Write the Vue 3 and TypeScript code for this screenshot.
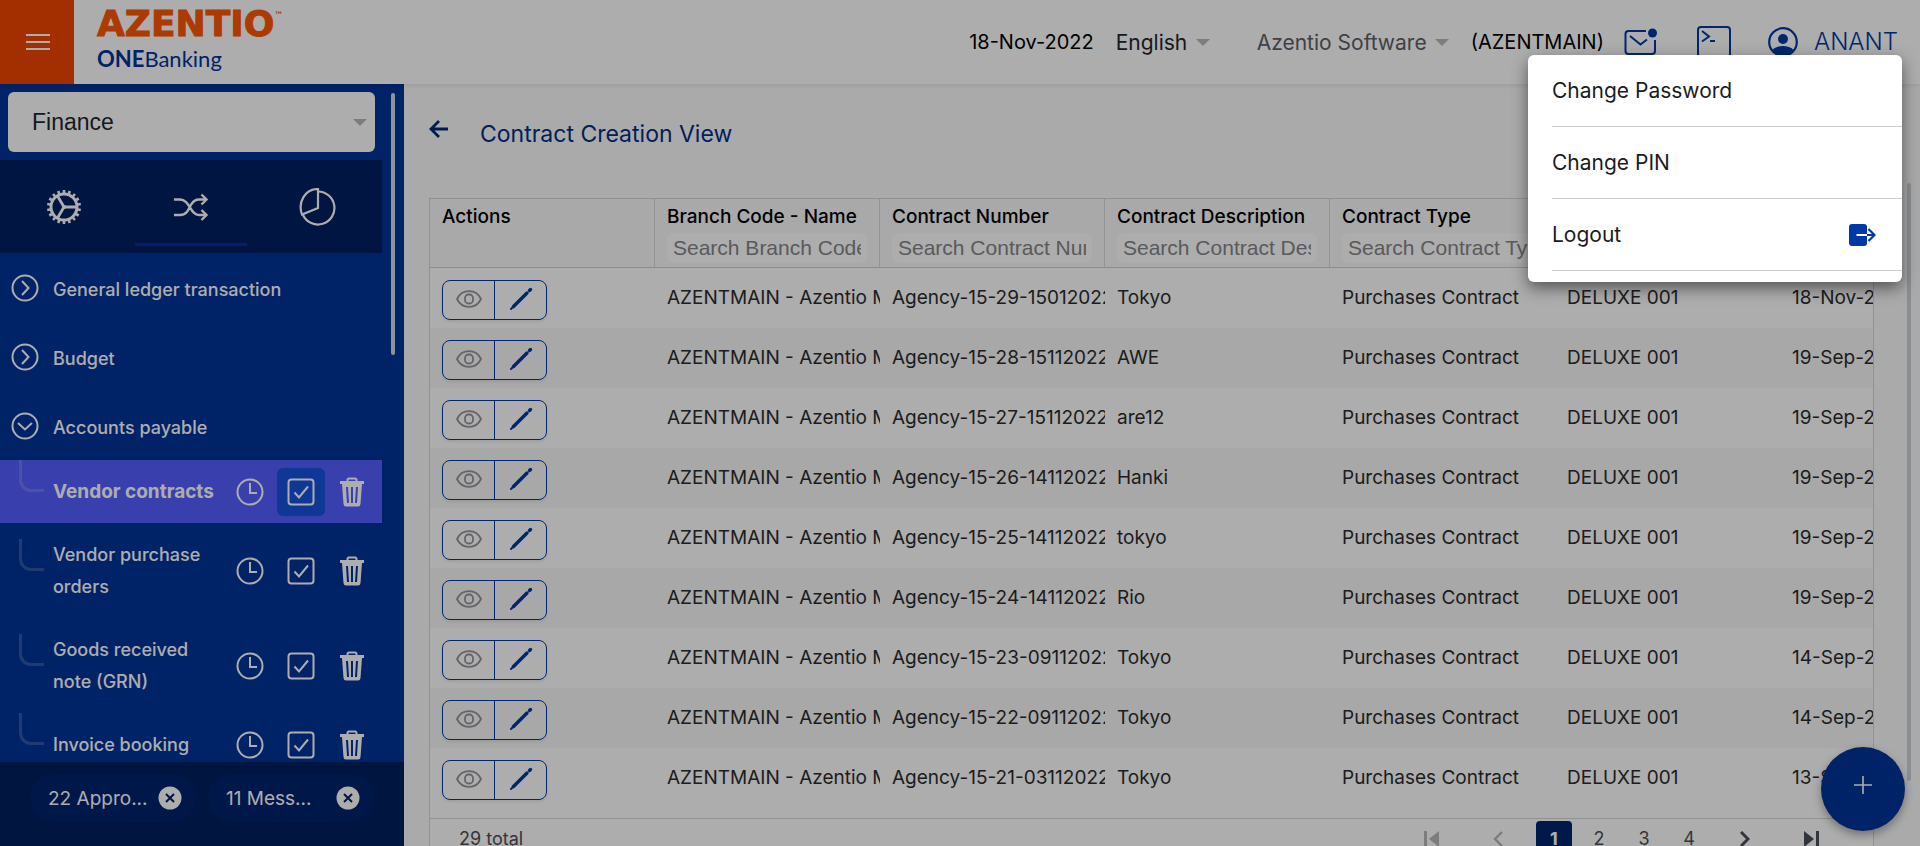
<script setup lang="ts">
import { ref } from 'vue'

interface ContractRow {
  number: string
  description: string
  date: string
}

interface SubItem {
  label: string
  active?: boolean
}

const groups: { label: string; open: boolean }[] = [
  { label: 'General ledger transaction', open: false },
  { label: 'Budget', open: false },
  { label: 'Accounts payable', open: true },
]

const subItems: SubItem[] = [
  { label: 'Vendor contracts', active: true },
  { label: 'Vendor purchase orders' },
  { label: 'Goods received note (GRN)' },
  { label: 'Invoice booking' },
]

const chips: string[] = ['22 Appro...', '11 Mess...']

const columns: { title: string; placeholder: string; value: string }[] = [
  { title: 'Branch Code - Name', placeholder: 'Search Branch Code - Name', value: '' },
  { title: 'Contract Number', placeholder: 'Search Contract Number', value: '' },
  { title: 'Contract Description', placeholder: 'Search Contract Description', value: '' },
  { title: 'Contract Type', placeholder: 'Search Contract Type', value: '' },
  { title: 'Business Partner', placeholder: 'Search Business Partner', value: 'DELUXE 001' },
  { title: 'Txn Date', placeholder: 'Search Txn Date', value: '' },
]

const rows: ContractRow[] = [
  { number: 'Agency-15-29-15012022', description: 'Tokyo', date: '18-Nov-2022' },
  { number: 'Agency-15-28-15112022', description: 'AWE', date: '19-Sep-2022' },
  { number: 'Agency-15-27-15112022', description: 'are12', date: '19-Sep-2022' },
  { number: 'Agency-15-26-14112022', description: 'Hanki', date: '19-Sep-2022' },
  { number: 'Agency-15-25-14112022', description: 'tokyo', date: '19-Sep-2022' },
  { number: 'Agency-15-24-14112022', description: 'Rio', date: '19-Sep-2022' },
  { number: 'Agency-15-23-09112022', description: 'Tokyo', date: '14-Sep-2022' },
  { number: 'Agency-15-22-09112022', description: 'Tokyo', date: '14-Sep-2022' },
  { number: 'Agency-15-21-03112022', description: 'Tokyo', date: '13-Sep-2022' },
]

const pages: number[] = [1, 2, 3, 4]
const currentPage = ref(1)
const module = ref('Finance')
const gearTeeth: number[] = Array.from({ length: 18 }, (_, i) => i * 20)
</script>

<template>
  <div class="shell">
    <header class="topbar">
      <button class="burger" aria-label="Toggle menu">
        <svg width="24" height="16" viewBox="0 0 24 16" fill="#fff">
          <rect width="24" height="2" y="0" /><rect width="24" height="2" y="7" /><rect width="24" height="2" y="14" />
        </svg>
      </button>
      <div class="brand">
        <div class="brand-name">AZENTIO<sup>™</sup></div>
        <div class="brand-product"><b>ONE</b>Banking</div>
      </div>
      <div class="tools">
        <span class="date">18-Nov-2022</span>
        <div class="picker language">
          <select aria-label="Language"><option>English</option></select>
          <i class="caret"></i>
        </div>
        <div class="picker company">
          <select aria-label="Company"><option>Azentio Software</option></select>
          <i class="caret"></i>
        </div>
        <span class="branch">(AZENTMAIN)</span>
        <button class="tool mail" aria-label="Messages">
          <svg width="34" height="28" viewBox="0 0 34 28" fill="none" stroke="#0039a6" stroke-width="2">
            <path d="M22 3H4.500Q1.500 3 1.500 6V23Q1.500 26 4.500 26H28Q31 26 31 23V12" />
            <path d="M6 8L16.500 16.500L23 11.500" />
            <circle cx="28.500" cy="5" r="4.500" fill="#0039a6" stroke="none" />
          </svg>
        </button>
        <button class="tool terminal" aria-label="Console">
          <svg width="34" height="32" viewBox="0 0 34 32" fill="none" stroke="#0039a6" stroke-width="2">
            <rect x="1" y="1" width="32" height="30" rx="3" />
            <path d="M5 5L12 10.500L5 15.500M13 15H18" />
          </svg>
        </button>
        <button class="tool user" aria-haspopup="menu" aria-expanded="true">
          <svg width="30" height="30" viewBox="0 0 30 30">
            <circle cx="15" cy="15" r="13.800" fill="none" stroke="#0039a6" stroke-width="2.200" />
            <circle cx="15" cy="12" r="5" fill="#0039a6" />
            <path d="M4.500 23C7 20 11 19 15 19C19 19 23 20 25.500 23C23 26.500 19 28.500 15 28.500C11 28.500 7 26.500 4.500 23Z" fill="#0039a6" />
          </svg>
          <span>ANANT</span>
        </button>
      </div>
    </header>

    <div class="body">
      <aside class="sidebar">
        <div class="side-scroll">
          <div class="side-main">
            <div class="module">
              <select v-model="module" aria-label="Module"><option>Finance</option></select>
              <i class="caret"></i>
            </div>
            <nav class="tabs" aria-label="Sections">
              <button aria-label="Settings">
                <svg width="36" height="36" viewBox="-18 -18 36 36" fill="none" stroke="#fff">
                  <circle r="13" stroke-width="3" />
                  <line v-for="a in gearTeeth" :key="a" x1="0" y1="-14" x2="0" y2="-17" stroke-width="2.600" :transform="`rotate(${a})`" />
                  <path d="M0 0H12M0 0L-6.500 -11M0 0L-6.500 11" stroke-width="2.800" />
                  <circle r="2" fill="#fff" stroke="none" />
                </svg>
              </button>
              <button class="current" aria-label="Transactions">
                <svg width="36" height="28" viewBox="0 0 36 28" fill="none" stroke="#fff" stroke-width="2.400">
                  <path d="M1 6.500H7C17 6.500 17 22 26 22H33M1 22H7C15 22 16 14.500 18.500 11C20.500 8 23 6.500 26 6.500H33" />
                  <path d="M28.500 1.500L33.500 6.500L28.500 11.500M28.500 17L33.500 22L28.500 27" />
                </svg>
              </button>
              <button aria-label="Reports">
                <svg width="38" height="38" viewBox="0 0 38 38" fill="none" stroke="#fff" stroke-width="2.200">
                  <path d="M19 3.500A16.500 16.500 0 1 1 4 27" />
                  <path d="M19 1V20L3 26.500C-1.500 14 6 1 19 1Z" />
                </svg>
              </button>
            </nav>
            <button v-for="g in groups" :key="g.label" class="group" :aria-expanded="g.open">
              <svg width="28" height="28" viewBox="0 0 28 28" fill="none" stroke="#fff" stroke-width="2">
                <circle cx="14" cy="14" r="12.500" />
                <path :d="g.open ? 'M7 11L14 17.500L21 11' : 'M11 7L17.500 14L11 21'" />
              </svg>
              <span>{{ g.label }}</span>
            </button>
            <div v-for="s in subItems" :key="s.label" class="sub" :class="{ active: s.active }">
              <i class="branch-line"></i>
              <a href="#">{{ s.label }}</a>
              <button aria-label="Pending">
                <svg width="28" height="28" viewBox="0 0 28 28" fill="none" stroke="#fff" stroke-width="2">
                  <circle cx="14" cy="14" r="12.500" />
                  <path d="M14 5V15H21" />
                </svg>
              </button>
              <button class="approve" aria-label="Approve">
                <svg width="28" height="28" viewBox="0 0 28 28" fill="none" stroke="#fff" stroke-width="2">
                  <rect x="1.500" y="1.500" width="25" height="25" rx="3" />
                  <path d="M7.500 14.500L12 19.500L21 8.500" />
                </svg>
              </button>
              <button aria-label="Delete">
                <svg width="26" height="30" viewBox="0 0 26 30">
                  <path d="M8.500 4V3Q8.500 1.500 10 1.500H16Q17.500 1.500 17.500 3V4" fill="none" stroke="#fff" stroke-width="2" />
                  <rect x="1" y="4" width="24" height="3" fill="#fff" />
                  <path d="M3 7H23L21.500 27Q21.300 29.500 19 29.500H7Q4.700 29.500 4.500 27Z" fill="#fff" />
                  <path d="M8 10L9 26M13 10V26M18 10L17 26" class="slots" />
                </svg>
              </button>
            </div>
          </div>
          <i class="side-thumb"></i>
        </div>
        <footer class="chips">
          <div v-for="c in chips" :key="c" class="chip">
            <span>{{ c }}</span>
            <button aria-label="Dismiss">
              <svg width="24" height="24" viewBox="0 0 24 24">
                <circle cx="12" cy="12" r="11.500" fill="#fff" />
                <path d="M8 8L16 16M16 8L8 16" stroke="#001f5c" stroke-width="2" />
              </svg>
            </button>
          </div>
        </footer>
      </aside>

      <main class="content">
        <div class="title-row">
          <button class="back" aria-label="Back">
            <svg width="20" height="18" viewBox="0 0 20 18" fill="none" stroke="#00297a" stroke-width="2.800">
              <path d="M19 9H2M10 1L2 9L10 17" />
            </svg>
          </button>
          <h1>Contract Creation View</h1>
        </div>
        <section class="grid">
          <div class="grid-view">
            <table>
              <thead>
                <tr>
                  <th>Actions</th>
                  <th v-for="c in columns" :key="c.title">
                    <label>
                      {{ c.title }}
                      <input type="text" :placeholder="c.placeholder" :value="c.value" />
                    </label>
                  </th>
                </tr>
              </thead>
              <tbody>
                <tr v-for="r in rows" :key="r.number">
                  <td>
                    <div class="actions">
                      <button aria-label="View">
                        <svg width="26" height="18" viewBox="0 0 26 18" fill="none" stroke="#94949c" stroke-width="1.800">
                          <path d="M1 9C6 -1.500 20 -1.500 25 9C20 19.500 6 19.500 1 9Z" />
                          <rect x="9" y="4.500" width="8" height="9" rx="3.500" />
                        </svg>
                      </button>
                      <button aria-label="Edit">
                        <svg width="24" height="24" viewBox="0 0 24 24" fill="none" stroke="#0039a6" stroke-linecap="round">
                          <path d="M4.500 19.500L18 6" stroke-width="3.400" />
                          <path d="M2 22L5 19" stroke-width="2" />
                          <path d="M20.500 3.500L21.500 2.500" stroke-width="3.400" />
                        </svg>
                      </button>
                    </div>
                  </td>
                  <td>AZENTMAIN - Azentio Main</td>
                  <td>{{ r.number }}</td>
                  <td>{{ r.description }}</td>
                  <td>Purchases Contract</td>
                  <td>DELUXE 001</td>
                  <td>{{ r.date }}</td>
                </tr>
              </tbody>
            </table>
          </div>
          <footer class="pager">
            <span class="total">29 total</span>
            <nav aria-label="Pages">
              <button class="edge off" aria-label="First page">
                <svg width="16" height="16" viewBox="0 0 16 16" fill="currentColor"><path d="M0 0H3V16H0ZM15 0V16L5 8Z" /></svg>
              </button>
              <button class="step off" aria-label="Previous page">
                <svg width="10" height="16" viewBox="0 0 10 16" fill="none" stroke="currentColor" stroke-width="2.400"><path d="M9 1L2 8L9 15" /></svg>
              </button>
              <button v-for="p in pages" :key="p" class="page" :class="{ on: p === currentPage }" @click="currentPage = p">{{ p }}</button>
              <button class="step" aria-label="Next page">
                <svg width="10" height="16" viewBox="0 0 10 16" fill="none" stroke="currentColor" stroke-width="3"><path d="M1 1L8 8L1 15" /></svg>
              </button>
              <button class="edge" aria-label="Last page">
                <svg width="16" height="16" viewBox="0 0 16 16" fill="currentColor"><path d="M13 0H16V16H13ZM1 0V16L11 8Z" /></svg>
              </button>
            </nav>
          </footer>
        </section>
        <i class="page-thumb"></i>
        <button class="fab" aria-label="Add contract">
          <svg width="18" height="18" viewBox="0 0 18 18" stroke="#fff" stroke-width="1.600"><path d="M9 0V18M0 9H18" /></svg>
        </button>
      </main>
    </div>

    <div class="backdrop"></div>
    <div class="menu" role="menu">
      <button role="menuitem">Change Password</button>
      <button role="menuitem">Change PIN</button>
      <button role="menuitem">
        Logout
        <svg width="28" height="24" viewBox="0 0 28 24">
          <rect x="1" y="1" width="18" height="22" rx="3" fill="#0039a6" />
          <path d="M8.500 12H19" stroke="#fff" stroke-width="2" />
          <path d="M19 12H26M20.500 6L26.500 12L20.500 18" fill="none" stroke="#0039a6" stroke-width="2.200" />
        </svg>
      </button>
    </div>
  </div>
</template>

<style>
body {
  margin: 0;
  overflow: hidden;
}
</style>

<style scoped>
.shell {
  position: relative;
  display: flex;
  flex-direction: column;
  height: 100vh;
  overflow: hidden;
  background: #fbfbfb;
  color: #000;
  font-family: Inter, "Noto Sans", sans-serif;
  font-size: 19px;
}
*,
*::before {
  box-sizing: border-box;
}
button,
select,
input {
  margin: 0;
  padding: 0;
  border: 0;
  background: none;
  color: inherit;
  font: inherit;
}
button {
  display: flex;
  align-items: center;
  justify-content: center;
}
select {
  appearance: none;
}
svg {
  display: block;
  flex: none;
}
.caret {
  flex: none;
  border: 7px solid transparent;
  border-top-color: #b9b9bb;
  border-bottom: 0;
}

/* Top bar */
.topbar {
  display: flex;
  flex: none;
  height: 84px;
  background: #fff;
  box-shadow: 0 2px 4px rgba(0, 0, 0, 0.08);
  z-index: 1;
}
.burger {
  width: 74px;
  padding-left: 2px;
  background: #f04400;
}
.brand {
  margin-left: 23px;
  padding-top: 8px;
}
.brand-name {
  color: #ff5600;
  font: 700 36px/32px "DejaVu Sans", sans-serif;
  -webkit-text-stroke: 1px #ff5600;
}
.brand-name sup {
  font-size: 9px;
  line-height: 9px;
  vertical-align: 18px;
  -webkit-text-stroke: 0;
}
.brand-product {
  margin-top: 5px;
  color: #003399;
  font: 22px/28px Lato, sans-serif;
}
.tools {
  display: flex;
  align-items: center;
  margin-left: auto;
  padding-right: 22px;
  font-size: 20px;
}
.picker {
  display: flex;
  align-items: center;
  gap: 8px;
  font-size: 21px;
}
.language {
  margin: 0 47px 0 22px;
  color: #22262e;
}
.company {
  margin-right: 22px;
  color: #5d6168;
}
.mail {
  margin: 0 39px 0 20px;
}
.terminal {
  margin-right: 37px;
}
.user {
  gap: 16px;
  color: #0039a6;
  font: 300 24px/30px Inter, sans-serif;
}

/* Sidebar */
.body {
  display: flex;
  flex: 1;
  min-height: 0;
}
.sidebar {
  display: flex;
  flex: none;
  flex-direction: column;
  width: 404px;
  background: #003399;
  color: #fff;
}
.side-scroll {
  display: flex;
  flex: 1;
  min-height: 0;
  overflow: hidden;
}
.side-main {
  width: 382px;
}
.module {
  display: flex;
  align-items: center;
  height: 60px;
  margin: 8px 7px 8px 8px;
  padding: 0 8px 0 24px;
  border-radius: 6px;
  background: #fff;
  color: #22262e;
  font: 23px/30px "Liberation Sans", Arial, sans-serif;
}
.module select {
  flex: 1;
}
.tabs {
  display: grid;
  grid-template-columns: repeat(3, 1fr);
  height: 93px;
  background: #002061;
}
.tabs button {
  position: relative;
}
.tabs .current::before {
  position: absolute;
  bottom: 7px;
  left: 8px;
  right: 8px;
  height: 3px;
  background: #003399;
  content: "";
}
.group {
  justify-content: flex-start;
  gap: 14px;
  width: 100%;
  height: 69px;
  padding-left: 11px;
  font-size: 18px;
  font-weight: 500;
}
.group span {
  padding-top: 3px;
}
.sub {
  display: flex;
  align-items: center;
  padding: 16px 0 15px;
}
.sub.active {
  background: #555eff;
}
.sub a {
  flex: 1;
  padding-right: 10px;
  color: #fff;
  font-size: 18px;
  font-weight: 500;
  line-height: 32px;
  text-decoration: none;
}
.sub.active a {
  padding-right: 0;
  font-size: 19px;
  font-weight: 700;
}
.branch-line {
  flex: none;
  align-self: center;
  width: 25px;
  height: 32px;
  margin: -32px 9px 0 19px;
  border: solid rgba(200, 200, 220, 0.25);
  border-width: 0 0 3px 3px;
  border-radius: 0 0 0 12px;
}
.sub button {
  width: 48px;
  height: 32px;
}
.sub button:last-child {
  margin-right: 6px;
}
.sub .approve {
  height: 48px;
  margin: -8px 3px;
  border-radius: 6px;
}
.active .approve {
  background: #1652dd;
}
.slots {
  stroke: #003399;
  stroke-width: 2;
}
.active .slots {
  stroke: #555eff;
}
.side-thumb {
  width: 4px;
  height: 262px;
  margin: 9px 0 0 9px;
  border-radius: 2px;
  background: #d2d8da;
}
.chips {
  display: flex;
  flex: none;
  gap: 12px;
  height: 84px;
  padding: 12px 30px;
  background: #001f5e;
}
.chip {
  display: flex;
  align-items: center;
  justify-content: space-between;
  width: 166px;
  height: 48px;
  padding: 0 14px 0 18px;
  border-radius: 24px;
  background: #00236d;
}

/* Content */
.content {
  position: relative;
  flex: 1;
  min-width: 0;
  padding-right: 46px;
  padding-left: 25px;
}
.title-row {
  display: flex;
  height: 114px;
  padding-top: 35px;
}
.back {
  height: 20px;
}
h1 {
  margin: 0 0 0 31px;
  color: #003085;
  font-size: 23px;
  font-weight: 400;
  line-height: 30px;
}
.grid {
  border: 1px solid #d8d8d8;
  background: #fff;
}
.grid-view {
  height: 619px;
  overflow: hidden;
}
table {
  width: 1575px;
  border-collapse: separate;
  border-spacing: 0;
  table-layout: fixed;
}
th {
  height: 69px;
  padding: 4px 12px;
  border-right: 1px solid #d8d8d8;
  border-bottom: 1px solid #d0d0d0;
  background: #fafafa;
  font-weight: 500;
  line-height: 28px;
  text-align: left;
  vertical-align: top;
  white-space: nowrap;
}
th input {
  display: block;
  width: 100%;
  height: 30px;
  margin-top: 2px;
  padding: 0 6px;
  border-radius: 6px;
  background: #fff;
  font: 21px/28px "Liberation Sans", Arial, sans-serif;
}
th input::placeholder {
  color: #85858a;
  opacity: 1;
}
td {
  height: 60px;
  padding: 0 0 2px 12px;
  overflow: hidden;
  color: #2c2c2e;
  white-space: nowrap;
}
tbody tr:nth-child(even) {
  background: #f8f8f8;
}
.actions {
  display: flex;
  width: 105px;
  height: 40px;
  margin-top: 6px;
  border: 1px solid #0039a6;
  border-radius: 8px;
  box-shadow: 0 2px 3px rgba(0, 0, 0, 0.08);
}
.actions button {
  flex: 1;
  padding-bottom: 3px;
}
.actions button + button {
  border-left: 1px solid #0039a6;
}
.pager {
  display: flex;
  justify-content: space-between;
  padding: 2px 34px 0 29px;
  border-top: 1px solid #d8d8d8;
  color: #4a4f57;
  font-size: 18px;
  line-height: 36px;
}
.pager nav {
  display: flex;
  align-items: center;
  gap: 9px;
}
.page {
  width: 36px;
  height: 36px;
  border-radius: 4px;
}
.page.on {
  background: #00256e;
  color: #fff;
  font-weight: 700;
}
.step {
  margin: 0 24px;
}
.edge {
  margin: 0 20px;
}
.off {
  color: #b8b8ba;
}
.page-thumb {
  position: absolute;
  top: 99px;
  right: 9px;
  width: 4px;
  height: 598px;
  border-radius: 2px;
  background: #ccd4d8;
}
.fab {
  position: absolute;
  right: 15px;
  bottom: 15px;
  width: 84px;
  height: 84px;
  padding-bottom: 8px;
  border-radius: 50%;
  background: #003399;
  box-shadow: 0 4px 10px rgba(0, 0, 0, 0.35);
}

/* Account menu */
.backdrop {
  position: absolute;
  inset: 0;
  z-index: 2;
  background: rgba(0, 0, 0, 0.32);
}
.menu {
  position: absolute;
  top: 55px;
  right: 18px;
  z-index: 3;
  width: 374px;
  padding: 0 0 11px 24px;
  border-radius: 6px;
  background: #fff;
  box-shadow: 0 6px 16px rgba(0, 0, 0, 0.5);
  color: #1c1c1e;
  font-size: 21px;
}
.menu button {
  justify-content: space-between;
  width: 100%;
  height: 72px;
  padding-right: 26px;
  border-bottom: 1px solid #ccc;
}
</style>
